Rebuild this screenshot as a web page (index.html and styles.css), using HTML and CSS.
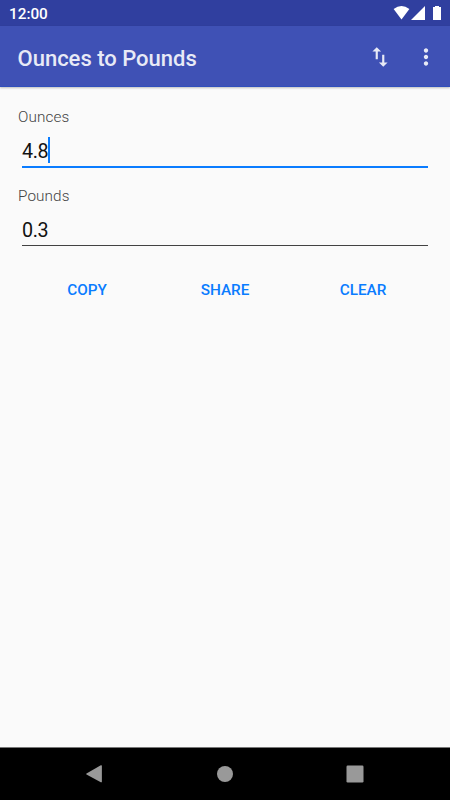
FILE: index.html
```html
<!DOCTYPE html>
<html lang="en">

<head>
  <meta charset="UTF-8">
  <meta name="viewport" content="width=device-width, initial-scale=1.0">
  <title>Ounces to Pounds</title>
  <link rel="stylesheet" href="styles.css">
</head>

<body>
  <div class="status-bar">
    <span class="clock">12:00</span>
    <svg class="status-icons" width="50" height="16" viewBox="0 0 50 16" fill="#fff">
      <path d="M.6 4Q8.5-2.2 16.4 4L8.5 14.5z" />
      <path d="M32 1V15H18z" />
      <path d="M40 2h2V1h4v1h2V15H40z" />
    </svg>
  </div>

  <header class="toolbar">
    <h1>Ounces to Pounds</h1>
    <button class="icon-button" aria-label="Swap">
      <svg width="26" height="26" viewBox="0 0 24 24">
        <path d="M16 17.010V10h-2v7.010h-3L15 21l4-3.990h-3zM9 3L5 6.990h3V14h2V6.990h3L9 3z" />
      </svg>
    </button>
    <button class="icon-button more" aria-label="More options">
      <svg width="26" height="26" viewBox="0 0 24 24">
        <path d="M12 8c1.100 0 2-.9 2-2s-.9-2-2-2-2 .9-2 2 .9 2 2 2zm0 2c-1.100 0-2 .9-2 2s.9 2 2 2 2-.9 2-2-.9-2-2-2zm0 6c-1.100 0-2 .9-2 2s.9 2 2 2 2-.9 2-2-.9-2-2-2z" />
      </svg>
    </button>
  </header>

  <main class="content">
    <div class="label">Ounces</div>
    <div class="field active">4.8<span class="caret"></span></div>

    <div class="label">Pounds</div>
    <div class="field">0.3</div>

    <div class="button-group">
      <button>COPY</button>
      <button>SHARE</button>
      <button>CLEAR</button>
    </div>
  </main>

  <nav class="nav-bar">
    <svg width="18" height="20" viewBox="0 0 18 20">
      <path d="M1.500 9.400L15.800 1.300Q16.900.8 16.900 2V17.500Q16.900 18.700 15.800 18.200L1.500 10.400Q.8 9.900 1.500 9.400z" />
    </svg>
    <svg width="18" height="18" viewBox="0 0 18 18">
      <circle cx="9" cy="9" r="8" />
    </svg>
    <svg width="18" height="18" viewBox="0 0 18 18">
      <rect x=".5" y=".5" width="17" height="17" rx="1.200" />
    </svg>
  </nav>
</body>

</html>
```

FILE: styles.css
```css
* {
  box-sizing: border-box;
}

body {
  display: flex;
  flex-direction: column;
  height: 800px;
  margin: 0;
  background: #fafafa;
  font-family: Roboto, sans-serif;
  overflow: hidden;
}

button {
  padding: 0;
  border: none;
  background: none;
  font-family: inherit;
  cursor: pointer;
}

.status-bar {
  display: flex;
  justify-content: space-between;
  height: 26px;
  padding: 5px 7px 0 9px;
  background: #303f9f;
}

.clock {
  color: #fff;
  font-size: 15.3px;
  font-weight: 500;
  line-height: 18px;
}

.toolbar {
  display: flex;
  align-items: center;
  height: 61px;
  padding: 1px 11px 0 17.5px;
  background: #3f51b5;
  border-bottom: 1px solid #304fbc;
  box-shadow: 0 1px 2px rgba(0, 0, 0, 0.25);
}

.toolbar h1 {
  flex: 1;
  margin: 4px 0 0;
  color: #e8eaf6;
  font-size: 22px;
  font-weight: 500;
  line-height: 26px;
}

.icon-button {
  height: 26px;
}

.icon-button svg {
  display: block;
  fill: #e8eaf6;
}

.more {
  margin-left: 20px;
}

.content {
  flex: 1;
  padding: 20px 18px 0;
}

.label {
  height: 19px;
  color: #444;
  font-size: 15.3px;
  font-weight: 300;
  letter-spacing: 0.1px;
  line-height: 21px;
}

.field {
  display: flex;
  height: 41px;
  margin: 0 4px 19px;
  padding-top: 11px;
  border-bottom: 1px solid #424242;
  color: #111;
  font-size: 19.7px;
  letter-spacing: -0.4px;
  line-height: 29px;
}

.field.active {
  height: 42px;
  margin-bottom: 18px;
  border-bottom: 2px solid #0a7cff;
}

.caret {
  width: 2px;
  height: 26px;
  background: #0a7cff;
}

.button-group {
  display: grid;
  grid-template-columns: repeat(3, 1fr);
  height: 50px;
}

.button-group button {
  color: #0a7cff;
  font-size: 15.3px;
  font-weight: 500;
}

.nav-bar {
  display: flex;
  align-items: center;
  justify-content: space-between;
  height: 53px;
  padding: 0 86px 0 85px;
  border-top: 1px solid #777;
  background: #000;
}

.nav-bar svg {
  fill: #999;
}
```
